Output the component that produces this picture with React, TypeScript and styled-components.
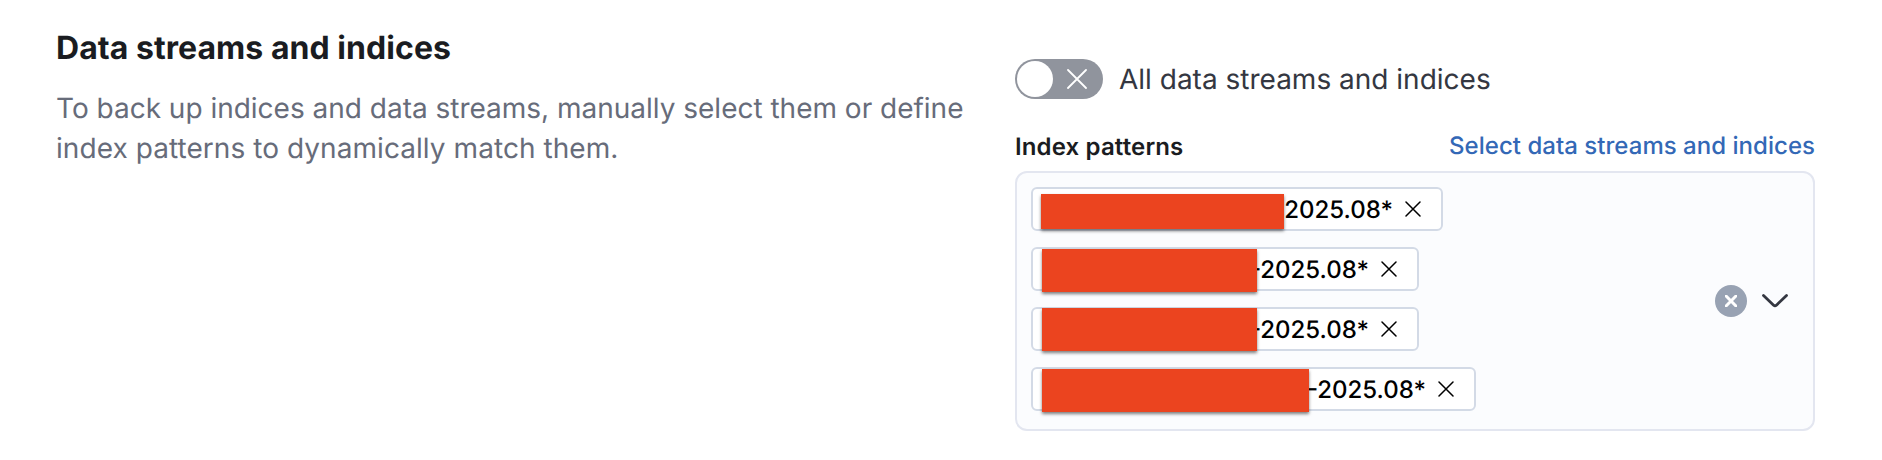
import React from "react";
import styled, { createGlobalStyle } from "styled-components";

const GlobalStyle = createGlobalStyle`
  * { box-sizing: border-box; }
  body {
    margin: 0;
    background: #fff;
    font-family: Inter, "Liberation Sans", sans-serif;
    text-rendering: geometricPrecision;
  }
`;

const FormGroup = styled.section`
  display: grid;
  grid-template-columns: 927px 800px;
  column-gap: 32px;
  height: 460px;
  padding: 0 67px 0 56px;
`;

const Description = styled.div`
  padding-top: 24px;
`;

const Title = styled.h3`
  margin: 0;
  font-size: 32px;
  line-height: 48px;
  font-weight: 700;
  letter-spacing: 0.05px;
  color: #1a1c21;
  white-space: nowrap;
`;

const Copy = styled.p`
  margin: 16px 0 0;
  font-size: 28px;
  line-height: 40px;
  color: #676c7a;
  white-space: nowrap;
`;

const CopyLine = styled.span<{ $spacing: number }>`
  display: block;
  letter-spacing: ${(p) => p.$spacing}px;
`;

const Fields = styled.div`
  padding-top: 59px;
`;

const Switch = styled.div`
  display: flex;
  align-items: center;
  height: 40px;
  gap: 16px;
`;

const Track = styled.div`
  display: flex;
  align-items: center;
  justify-content: space-between;
  width: 88px;
  height: 40px;
  padding: 0 16px 0 2px;
  border-radius: 20px;
  background: #90949d;
`;

const Thumb = styled.span`
  width: 36px;
  height: 36px;
  border-radius: 50%;
  background: #fff;
`;

const SwitchLabel = styled.span`
  font-size: 28px;
  line-height: 40px;
  color: #343741;
  white-space: nowrap;
`;

const LabelRow = styled.div`
  display: flex;
  justify-content: space-between;
  align-items: center;
  height: 32px;
  margin: 31px 0 9px;
  font-size: 24px;
  line-height: 32px;
  white-space: nowrap;
`;

const Label = styled.span`
  padding-top: 2px;
  font-weight: 600;
  letter-spacing: 0.14px;
  color: #1a1c21;
`;

const Link = styled.a`
  font-weight: 500;
  letter-spacing: 0.03px;
  color: #3368b6;
`;

const ComboBox = styled.div`
  display: flex;
  align-items: center;
  justify-content: space-between;
  height: 260px;
  padding: 0 25px 0 14px;
  border: 2px solid #e3e6f0;
  border-radius: 12px;
  background: #fbfcfe;
`;

const Pills = styled.div`
  display: flex;
  flex-direction: column;
  align-self: flex-start;
  gap: 16px;
  padding-top: 14px;
`;

const Pill = styled.div<{ $width: number }>`
  position: relative;
  display: flex;
  align-items: center;
  justify-content: flex-end;
  gap: 12px;
  width: ${(p) => p.$width}px;
  height: 44px;
  padding-right: 20px;
  border: 2px solid #d3dae6;
  border-radius: 6px;
  background: #fff;
  color: #000;
  font-size: 24px;
  line-height: 36px;
  font-weight: 500;
  white-space: nowrap;
`;

const PillText = styled.span`
  padding-top: 2px;
`;

const Redaction = styled.span<{ $left: number; $top: number; $width: number; $height: number }>`
  position: absolute;
  left: ${(p) => p.$left}px;
  top: ${(p) => p.$top}px;
  width: ${(p) => p.$width}px;
  height: ${(p) => p.$height}px;
  background: #eb441f;
  box-shadow: 0 2px 3px rgba(0, 0, 0, 0.5);
`;

const Actions = styled.div`
  display: flex;
  align-items: center;
  gap: 15px;
`;

const Clear = styled.span`
  display: flex;
  align-items: center;
  justify-content: center;
  width: 32px;
  height: 32px;
  border-radius: 50%;
  background: #98a2b3;
`;

interface CrossProps {
  size: number;
  color: string;
  weight: number;
}

const Cross = ({ size, color, weight }: CrossProps) => (
  <svg width={size} height={size} viewBox={`0 0 ${size} ${size}`} fill="none">
    <path
      d={`M1 1L${size - 1} ${size - 1}M${size - 1} 1L1 ${size - 1}`}
      stroke={color}
      strokeWidth={weight}
      strokeLinecap="round"
    />
  </svg>
);

const patterns = [
  { text: "2025.08*", width: 412, left: 8, top: 5, cover: 243, height: 35 },
  { text: "-2025.08*", width: 388, left: 9, top: 0, cover: 215, height: 43 },
  { text: "-2025.08*", width: 388, left: 9, top: -1, cover: 215, height: 43 },
  { text: "-2025.08*", width: 445, left: 9, top: 0, cover: 267, height: 43 },
];

export default function App() {
  return (
    <>
      <GlobalStyle />
      <FormGroup>
        <Description>
          <Title>Data streams and indices</Title>
          <Copy>
            <CopyLine $spacing={-0.01}>
              To back up indices and data streams, manually select them or define
            </CopyLine>
            <CopyLine $spacing={0.06}>index patterns to dynamically match them.</CopyLine>
          </Copy>
        </Description>
        <Fields>
          <Switch>
            <Track>
              <Thumb />
              <Cross size={20} color="#fff" weight={1.8} />
            </Track>
            <SwitchLabel>All data streams and indices</SwitchLabel>
          </Switch>
          <LabelRow>
            <Label>Index patterns</Label>
            <Link>Select data streams and indices</Link>
          </LabelRow>
          <ComboBox>
            <Pills>
              {patterns.map((p, i) => (
                <Pill key={i} $width={p.width}>
                  <PillText>{p.text}</PillText>
                  <Cross size={16} color="#000" weight={1.5} />
                  <Redaction $left={p.left} $top={p.top} $width={p.cover} $height={p.height} />
                </Pill>
              ))}
            </Pills>
            <Actions>
              <Clear>
                <Cross size={12} color="#fff" weight={3} />
              </Clear>
              <svg width="26" height="14" viewBox="0 0 26 14" fill="none">
                <path
                  d="M1.5 1.5L11.6 11.2Q13 12.4 14.4 11.2L24.5 1.5"
                  stroke="#343741"
                  strokeWidth="2.8"
                  strokeLinecap="round"
                />
              </svg>
            </Actions>
          </ComboBox>
        </Fields>
      </FormGroup>
    </>
  );
}
